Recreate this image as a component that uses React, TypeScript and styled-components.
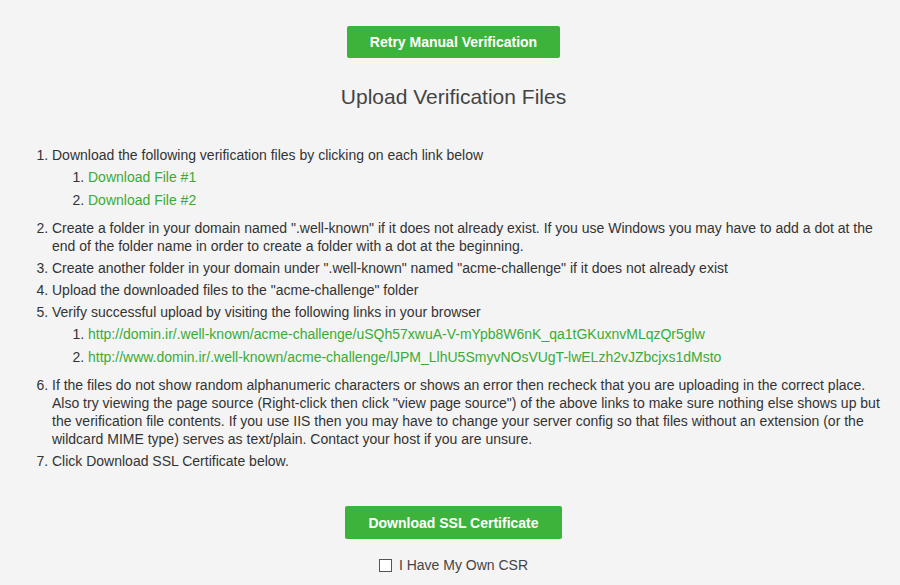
import React, { useState } from 'react'
import styled, { createGlobalStyle } from 'styled-components'

const GlobalStyle = createGlobalStyle`
   html, body {
      margin: 0;
      padding: 0;
      background: #f4f4f4;
   }
   body {
      font-family: "Liberation Sans", Arial, sans-serif;
      color: #333333;
   }
`

const Page = styled.div`
   min-height: 585px;
   box-sizing: border-box;
   padding: 26px 15px 0 22px;
   background: #f4f4f4;
`

const Center = styled.div`
   display: flex;
   flex-direction: column;
   align-items: center;
`

const GreenButton = styled.button<{ $tall?: boolean }>`
   height: ${(p) => (p.$tall ? '33px' : '32px')};
   padding: 0 23px;
   border: none;
   border-radius: 2px;
   background: #3cb43c;
   color: #ffffff;
   font-family: "Liberation Sans", Arial, sans-serif;
   font-size: 14px;
   font-weight: bold;
   cursor: pointer;
   &:hover {
      background: #34a534;
   }
`

const Title = styled.h2`
   margin: 27px 0 37px;
   font-size: 21px;
   line-height: 24px;
   font-weight: normal;
   color: #444444;
   text-align: center;
`

const Steps = styled.ol`
   margin: 0;
   padding-left: 30px;
   font-size: 14px;
   line-height: 18px;
`

const Step = styled.li`
   margin-bottom: 4px;
`

const SubSteps = styled.ol`
   margin: 4px 0 10px;
   padding-left: 36px;
   & > li {
      margin-bottom: 5px;
   }
`

const Link = styled.a`
   color: #3aab36;
   text-decoration: none;
   &:hover {
      text-decoration: underline;
   }
`

const Footer = styled(Center)`
   margin-top: 36px;
   gap: 17px;
`

const CheckLabel = styled.label`
   display: flex;
   align-items: center;
   gap: 7px;
   font-size: 14px;
   line-height: 19px;
   color: #444444;
   cursor: pointer;
`

const Box = styled.span<{ $checked: boolean }>`
   width: 11px;
   height: 11px;
   border: 1px solid #555555;
   background: ${(p) => (p.$checked ? '#3cb43c' : '#ffffff')};
`

const links = [
   'http://domin.ir/.well-known/acme-challenge/uSQh57xwuA-V-mYpb8W6nK_qa1tGKuxnvMLqzQr5glw',
   'http://www.domin.ir/.well-known/acme-challenge/lJPM_LlhU5SmyvNOsVUgT-lwELzh2vJZbcjxs1dMsto',
]

const App: React.FC = () => {
   const [ownCsr, setOwnCsr] = useState(false)

   return (
      <Page>
         <GlobalStyle />
         <Center>
            <GreenButton>Retry Manual Verification</GreenButton>
         </Center>
         <Title>Upload Verification Files</Title>
         <Steps>
            <Step>
               Download the following verification files by clicking on each link below
               <SubSteps>
                  <Step><Link href="#">Download File #1</Link></Step>
                  <Step><Link href="#">Download File #2</Link></Step>
               </SubSteps>
            </Step>
            <Step>
               Create a folder in your domain named ".well-known" if it does not already exist. If you use Windows you may have to add a dot at the end of the folder name in order to create a folder with a dot at the beginning.
            </Step>
            <Step>Create another folder in your domain under ".well-known" named "acme-challenge" if it does not already exist</Step>
            <Step>Upload the downloaded files to the "acme-challenge" folder</Step>
            <Step>
               Verify successful upload by visiting the following links in your browser
               <SubSteps>
                  {links.map((l) => (
                     <Step key={l}><Link href="#">{l}</Link></Step>
                  ))}
               </SubSteps>
            </Step>
            <Step>
               If the files do not show random alphanumeric characters or shows an error then recheck that you are uploading in the correct place. Also try viewing the page source (Right-click then click "view page source") of the above links to make sure nothing else shows up but the verification file contents. If you use IIS then you may have to change your server config so that files without an extension (or the wildcard MIME type) serves as text/plain. Contact your host if you are unsure.
            </Step>
            <Step>Click Download SSL Certificate below.</Step>
         </Steps>
         <Footer>
            <GreenButton $tall>Download SSL Certificate</GreenButton>
            <CheckLabel onClick={() => setOwnCsr(!ownCsr)}>
               <Box $checked={ownCsr} />
               I Have My Own CSR
            </CheckLabel>
         </Footer>
      </Page>
   )
}

export default App
